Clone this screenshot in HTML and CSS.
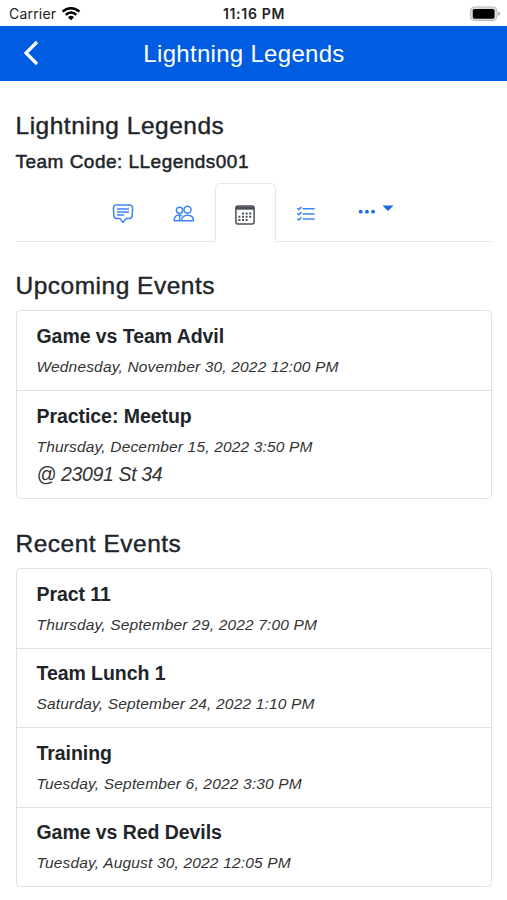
FILE: index.html
```html
<!DOCTYPE html>
<html lang="en">
<head>
<meta charset="utf-8">
<title>Lightning Legends</title>
<link rel="stylesheet" href="styles.css">
</head>
<body>
<div class="status">
  <div class="carrier"><span>Carrier</span>
    <svg width="20" height="15" viewBox="0 0 20 15" fill="none" stroke="#000" stroke-width="2.5"><path d="M1.600 5.600a12 12 0 0 1 16.800 0M4.700 8.800a7.500 7.500 0 0 1 10.600 0"/><path d="M7 11.200a4.300 4.300 0 0 1 6 0l-3 3z" fill="#000" stroke="none"/></svg>
  </div>
  <span class="clock">11:16 PM</span>
  <svg class="battery" width="32" height="16" viewBox="0 0 32 16"><rect x="1.500" y="1" width="26.500" height="13.500" rx="4" fill="#ddd" stroke="#bbb"/><rect x="3.800" y="3" width="21.700" height="9.700" rx="1.600"/><path d="M29.200 5.500q2 .8 2 2.300t-2 2.300z" fill="#aaa"/></svg>
</div>
<header class="navbar">
  <svg class="back" width="16" height="26" viewBox="0 0 16 26" fill="none" stroke="#fff" stroke-width="3.200"><path d="M14 2L3 13l11 11"/></svg>
  <span class="navtitle">Lightning Legends</span>
</header>
<main>
  <h1 class="team">Lightning Legends</h1>
  <p class="code">Team Code: LLegends001</p>
  <nav class="tabs">
    <a class="tab"><svg width="22" height="20" viewBox="0 0 22 20" fill="none" stroke="#3d85f0" stroke-width="1.500" stroke-linejoin="round"><path d="M3.200 1h15.600l1.700 1.700v4l-.5 6.200-1.700 1.700H14l-3 3.900-3-3.900H3.700L2 12.900 1.500 6.700v-4z"/><path d="M5 5h12M5 8h12M5 11h7"/></svg></a>
    <a class="tab"><svg width="22" height="18" viewBox="0 0 22 18" fill="none" stroke="#3d85f0" stroke-width="1.500" stroke-linejoin="round"><circle cx="6.500" cy="5.300" r="3.100"/><circle cx="14.500" cy="4.800" r="3.500"/><path d="M8.500 15.800c0-3.500 2.500-5.600 6-5.600s6 2.100 6 5.600zM8.300 15.800H1.200c0-3.700 1.800-5.800 4.800-5.800q1.700 0 3 1M6.600 10.500v5"/></svg></a>
    <a class="tab active"><svg width="20" height="20" viewBox="0 0 20 20" fill="none" stroke="#4b5157" stroke-width="1.500"><rect x=".9" y=".9" width="18.200" height="18.200" rx="2"/><path d="M1 1.500h18v3.200H1z" fill="#4b5157" stroke="none"/><path d="M7 8.400h10M3.400 11.700h13.600M3.400 15h10" stroke-width="2" stroke-dasharray="2 1.600"/></svg></a>
    <a class="tab"><svg width="18" height="16" viewBox="0 0 18 16" fill="none" stroke="#3d85f0" stroke-width="1.500" stroke-linecap="round"><path d="M6.200 2.700h11M6.200 7.900h11M6.200 13.100h11M.8 2.700l1 .8L4 1.400M.8 7.900l1 .8L4 6.600M.8 13.100l1 .8L4 11.800"/></svg></a>
    <a class="tab more"><svg width="36" height="14" viewBox="0 0 36 14" fill="#1769e4"><circle cx="2.700" cy="8.700" r="1.900"/><circle cx="8.900" cy="8.700" r="1.900"/><circle cx="15.100" cy="8.700" r="1.900"/><path d="M24.500 2.600h11L30 8.100z"/></svg></a>
  </nav>
  <h2>Upcoming Events</h2>
  <ul class="list">
    <li><h3>Game vs Team Advil</h3><p class="date">Wednesday, November 30, 2022 12:00 PM</p></li>
    <li><h3>Practice: Meetup</h3><p class="date">Thursday, December 15, 2022 3:50 PM</p><p class="place">@ 23091 St 34</p></li>
  </ul>
  <h2>Recent Events</h2>
  <ul class="list">
    <li><h3>Pract 11</h3><p class="date">Thursday, September 29, 2022 7:00 PM</p></li>
    <li><h3>Team Lunch 1</h3><p class="date">Saturday, September 24, 2022 1:10 PM</p></li>
    <li><h3>Training</h3><p class="date">Tuesday, September 6, 2022 3:30 PM</p></li>
    <li><h3>Game vs Red Devils</h3><p class="date">Tuesday, August 30, 2022 12:05 PM</p></li>
  </ul>
</main>
</body>
</html>
```
FILE: styles.css
```css
* { box-sizing: border-box; }
body { margin: 0; background: #fff; color: #212529; font-family: "Liberation Sans", Arial, sans-serif; white-space: nowrap; }
h1, h2, h3, p, ul { margin: 0; padding: 0; }
svg { display: block; flex: none; }
.status { height: 25.500px; display: grid; grid-template-columns: 1fr auto 1fr; align-items: center; padding: 2px 6px 0 9px; font: 14px/20px Inter, sans-serif; color: #222; }
.carrier { display: flex; align-items: center; gap: 5px; letter-spacing: .2px; }
.clock { font-weight: 600; letter-spacing: .7px; margin-left: -2px; }
.battery { justify-self: end; }
.navbar { height: 55.500px; background: #005ce0; color: #fff; display: grid; grid-template-columns: 40px 1fr 61px; align-items: center; padding: 0 21px 0 23px; }
.navtitle { padding-top: 2px; font-size: 24px; line-height: 32px; text-align: center; letter-spacing: .3px; }
main { padding: 29px 15px 0 15.500px; }
.team, h2 { font-size: 24.500px; line-height: 32px; font-weight: 400; letter-spacing: .5px; -webkit-text-stroke: .4px #212529; }
.code { margin-top: 8px; font-size: 19px; line-height: 24px; letter-spacing: .48px; -webkit-text-stroke: .5px #212529; }
.tabs { display: flex; justify-content: center; margin-top: 9px; height: 58.500px; border-bottom: 1px solid #e6e8ea; }
.tab { width: 61px; height: 58.500px; display: flex; align-items: center; justify-content: center; padding-top: 4px; border: 1px solid transparent; }
.active { border-color: #e6e8ea; border-bottom-color: #fff; border-radius: 5px 5px 0 0; background: #fff; padding-top: 5px; }
.more { width: 78px; padding: 0 0 4px; }
h2 { margin-top: 28.500px; }
.list { list-style: none; margin-top: 8px; border: 1px solid #dfe1e3; border-radius: 4.500px; }
li { padding: 12px 20px 11px; height: 79px; }
li + li { height: 79.500px; padding-top: 11.500px; border-top: 1px solid #dfe1e3; }
li:has(.place) { height: 108px; }
h3 { font-size: 19.500px; line-height: 26px; font-weight: 700; letter-spacing: -.06px; }
.date { margin-top: 8px; font-size: 15.500px; line-height: 20px; font-style: italic; letter-spacing: .17px; color: #333; }
.place { margin-top: 4px; font-size: 19.500px; line-height: 26px; font-style: italic; letter-spacing: -.35px; color: #333; }
```
